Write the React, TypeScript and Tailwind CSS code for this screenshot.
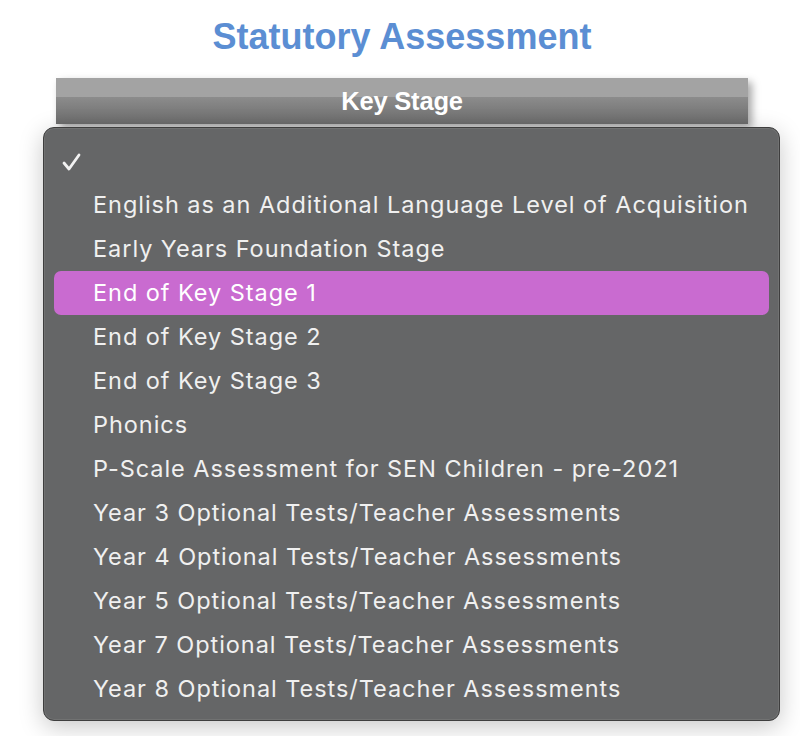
const items = [
  "English as an Additional Language Level of Acquisition",
  "Early Years Foundation Stage",
  "End of Key Stage 1",
  "End of Key Stage 2",
  "End of Key Stage 3",
  "Phonics",
  "P-Scale Assessment for SEN Children - pre-2021",
  "Year 3 Optional Tests/Teacher Assessments",
  "Year 4 Optional Tests/Teacher Assessments",
  "Year 5 Optional Tests/Teacher Assessments",
  "Year 7 Optional Tests/Teacher Assessments",
  "Year 8 Optional Tests/Teacher Assessments",
];

export default function App() {
  return (
    <div className="min-h-[736px] w-[800px] overflow-hidden bg-white font-['Liberation_Sans',Arial,sans-serif]">
      <h1 className="pl-[4px] pt-[16px] text-center text-[36px] font-bold leading-[42px] text-[#5b8ed3]">
        Statutory Assessment
      </h1>

      <div className="mx-[56px] mt-[20px] w-[692px] shadow-[4px_4px_8px_rgba(0,0,0,0.35)]">
        <div className="h-[46px] bg-[linear-gradient(to_bottom,#a3a3a3_0px,#a3a3a3_19px,#8c8c8c_19px,#6c6c6c_46px)]">
          <div className="flex h-full items-center justify-center pt-[1px] text-[25.5px] font-bold tracking-[-0.2px] text-white">
            Key Stage
          </div>
        </div>
      </div>

      <div className="mx-[43px] mt-[3px] w-[737px] rounded-[11px] border border-[#3e3e3e] bg-[#656667] pb-[9px] pt-[11px] shadow-[0_0_0_1px_rgba(255,255,255,0.08)_inset,0_6px_24px_rgba(0,0,0,0.22)]">
        <div className="flex h-[44px] items-center pl-[18px] pt-[2px]">
          <svg width="19" height="18" viewBox="0 0 19 18" fill="none">
            <path d="M2 10 L7 16 L17 2" stroke="#f2f2f2" strokeWidth="2.8" strokeLinecap="round" strokeLinejoin="round" />
          </svg>
        </div>
        {items.map((item) => {
          const active = item === "End of Key Stage 1";
          return (
            <div key={item} className="px-[10px]">
              <div
                className={
                  active
                    ? "flex h-[44px] items-center rounded-[7px] bg-[#c96bd0] pl-[39px] font-['Inter',sans-serif] text-[23.5px] tracking-[0.95px] text-white"
                    : "flex h-[44px] items-center rounded-[7px] pl-[39px] font-['Inter',sans-serif] text-[23.5px] tracking-[0.95px] text-[#f0f0f0]"
                }
              >
                {item}
              </div>
            </div>
          );
        })}
      </div>
    </div>
  );
}
